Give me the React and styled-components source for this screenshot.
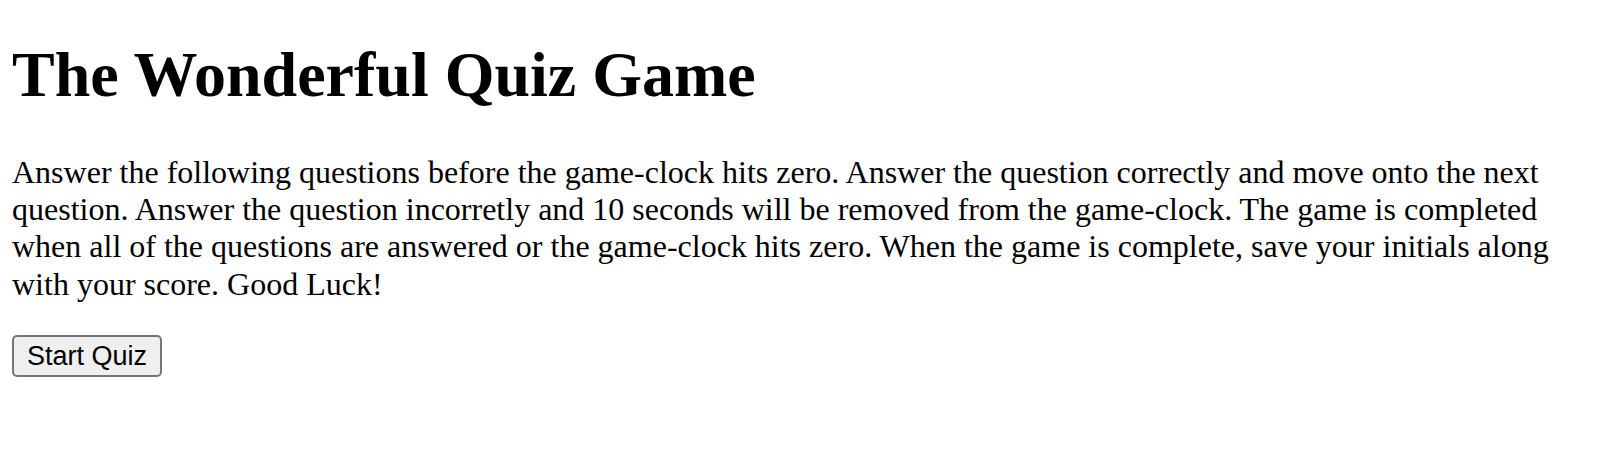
import React from "react";
import styled, { createGlobalStyle } from "styled-components";

const Global = createGlobalStyle`
  html, body { margin: 0; padding: 0; background: #fff; }
  body { font-family: "Liberation Serif", "Times New Roman", serif; color: #000; }
`;

const Page = styled.main`
  padding: 38px 12px 0 12px;
`;

const Title = styled.h1`
  margin: 0 0 42px 0;
  font-size: 64px;
  font-weight: bold;
  line-height: 1.15;
`;

const Intro = styled.p`
  margin: 0 0 32px 0;
  font-size: 32px;
  line-height: 37.4px;
  max-width: 1574px;
`;

const StartButton = styled.button`
  font-family: "Liberation Sans", Arial, sans-serif;
  font-size: 27px;
  padding: 0 13px;
  height: 42px;
  background: #efefef;
  border: 2px solid #767676;
  border-radius: 5px;
  color: #000;
`;

export default function App() {
  return (
    <>
      <Global />
      <Page>
        <Title>The Wonderful Quiz Game</Title>
        <Intro>
          Answer the following questions before the game-clock hits zero. Answer the question correctly and move onto the next question. Answer the question incorretly and 10 seconds will be removed from the game-clock. The game is completed when all of the questions are answered or the game-clock hits zero. When the game is complete, save your initials along with your score. Good Luck!
        </Intro>
        <StartButton>Start Quiz</StartButton>
      </Page>
    </>
  );
}
